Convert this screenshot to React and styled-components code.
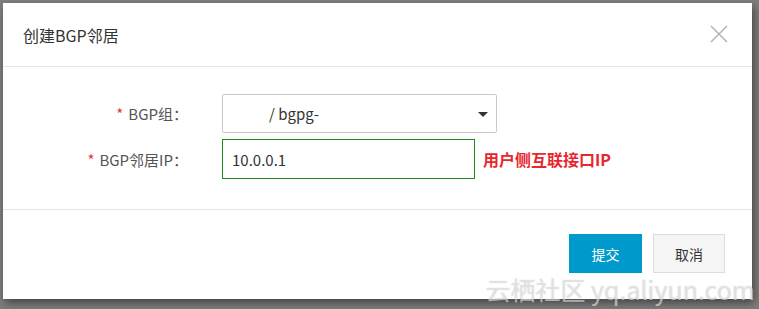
import React from "react";
import styled, { createGlobalStyle } from "styled-components";

const Global = createGlobalStyle`
  html, body {
    margin: 0;
    padding: 0;
    background: #7d7d7d;
  }
  * {
    box-sizing: border-box;
  }
`;

const App = () => {
  return (
    <Page>
      <Global />
      <Dialog>
        <Header>
          <Title>创建BGP邻居</Title>
          <Close aria-label="close">
            <svg width="18" height="18" viewBox="0 0 18 18">
              <path d="M1 1 L17 17 M17 1 L1 17" stroke="#b5b5b5" strokeWidth="1.6" fill="none" />
            </svg>
          </Close>
        </Header>
        <Body>
          <Row>
            <Label>
              <Star>*</Star>BGP组：
            </Label>
            <Select>
              <Blank />
              <span>/ bgpg-</span>
              <Caret />
            </Select>
          </Row>
          <Row>
            <Label>
              <Star>*</Star>BGP邻居IP：
            </Label>
            <Input defaultValue="10.0.0.1" />
            <Hint>用户侧互联接口IP</Hint>
          </Row>
        </Body>
        <Footer>
          <Button primary>提交</Button>
          <Button>取消</Button>
        </Footer>
      </Dialog>
      <Watermark>云栖社区 yq.aliyun.com</Watermark>
    </Page>
  );
};

export default App;

const Page = styled.div`
  position: relative;
  width: 759px;
  height: 309px;
  padding: 3px 0 0 3px;
  overflow: hidden;
  font-family: "Noto Sans CJK SC", "Liberation Sans", sans-serif;
`;

const Dialog = styled.div`
  width: 749px;
  height: 296px;
  background: #fff;
  display: flex;
  flex-direction: column;
  box-shadow: 2px 4px 8px rgba(0, 0, 0, 0.45);
`;

const Header = styled.div`
  height: 64px;
  border-bottom: 1px solid #e5e5e5;
  display: flex;
  align-items: center;
  justify-content: space-between;
  padding: 0 24px 0 20px;
`;

const Title = styled.h1`
  margin: 0;
  font-size: 16px;
  font-weight: 400;
  color: #333;
`;

const Close = styled.div`
  display: flex;
  margin-top: -2px;
`;

const Body = styled.div`
  height: 143px;
  border-bottom: 1px solid #e5e5e5;
  padding-top: 27px;
  display: flex;
  flex-direction: column;
  gap: 6px;
`;

const Row = styled.div`
  display: flex;
  align-items: center;
`;

const Label = styled.div`
  width: 187px;
  padding-right: 2px;
  text-align: right;
  font-size: 15px;
  color: #555;
  margin-right: 32px;
`;

const Star = styled.span`
  color: #e4393c;
  margin-right: 5px;
`;

const Select = styled.div`
  position: relative;
  width: 275px;
  height: 39px;
  border: 1px solid #c9c9c9;
  border-radius: 2px;
  display: flex;
  align-items: center;
  padding-left: 10px;
  font-size: 15px;
  color: #333;
`;

const Blank = styled.span`
  width: 36px;
`;

const Caret = styled.span`
  position: absolute;
  right: 8px;
  top: 17px;
  width: 0;
  height: 0;
  border-left: 5px solid transparent;
  border-right: 5px solid transparent;
  border-top: 5px solid #333;
`;

const Input = styled.input`
  width: 253px;
  height: 40px;
  border: 1px solid #1c8a1c;
  outline: none;
  padding: 0 9px;
  font-family: "Noto Sans CJK SC", "Liberation Sans", sans-serif;
  font-size: 15px;
  color: #333;
`;

const Hint = styled.span`
  margin-left: 8px;
  font-size: 16px;
  font-weight: 700;
  color: #e8262e;
`;

const Footer = styled.div`
  flex: 1;
  display: flex;
  justify-content: flex-end;
  align-items: flex-start;
  gap: 11px;
  padding: 24px 27px 0 0;
`;

const Button = styled.button`
  width: ${(p) => (p.primary ? "73px" : "72px")};
  height: 39px;
  border: 1px solid ${(p) => (p.primary ? "#0099cc" : "#ddd")};
  background: ${(p) => (p.primary ? "#0099cc" : "#f5f5f5")};
  color: ${(p) => (p.primary ? "#fff" : "#333")};
  font-family: "Noto Sans CJK SC", "Liberation Sans", sans-serif;
  font-size: 14px;
  padding: 0;
`;

const Watermark = styled.div`
  position: absolute;
  right: 4px;
  bottom: 2px;
  font-family: "Noto Sans CJK SC", "Liberation Sans", sans-serif;
  font-size: 25px;
  color: rgba(255, 255, 255, 0.5);
  text-shadow: 0 0 1px rgba(110, 110, 110, 0.45);
  pointer-events: none;
`;
